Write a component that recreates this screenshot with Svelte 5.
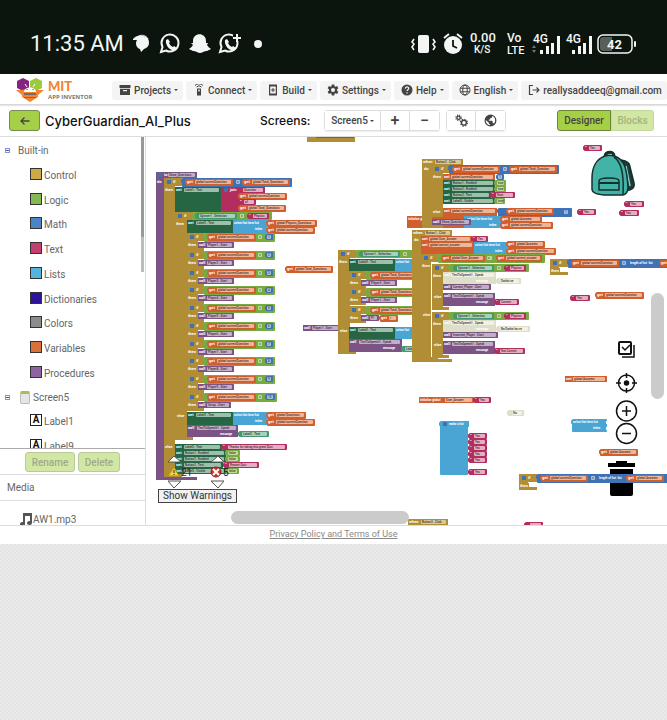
<script>
  const menus = [
    { id: 'projects', label: 'Projects' },
    { id: 'connect', label: 'Connect' },
    { id: 'build', label: 'Build' },
    { id: 'settings', label: 'Settings' },
    { id: 'help', label: 'Help' },
    { id: 'english', label: 'English' },
    { id: 'account', label: 'reallysaddeeq@gmail.com' }
  ];
  const drawers = [
    ['Control', '#cdaa48'], ['Logic', '#85b853'], ['Math', '#4c83c3'],
    ['Text', '#c33f70'], ['Lists', '#55b3dc'], ['Dictionaries', '#2b159a'],
    ['Colors', '#8c8c8c'], ['Variables', '#d9713a'], ['Procedures', '#8d64a0']
  ];

  const colors = {
    gold: '#b18e35', purple: '#7c5385', orange: '#d05f2d', green: '#266643',
    logic: '#77ab41', math: '#3f71b5', text: '#b32d5e', list: '#49a6d4',
    getter: '#439970', pale: '#dddfc8', white: '#ffffff'
  };
  const fields = {
    gold: '#d9c99b', purple: '#c3aec8', orange: '#efb599', green: '#9dbfac',
    logic: '#bddb9e', math: '#a7c1e2', text: '#e5aec5', list: '#b3dced',
    getter: '#a4d2bc', pale: '#f1f1e6', white: '#ffffff'
  };

  // [colour, x, y, width, height, label, field text, field offset, plug]
  const blocks = [];
  const add = (...b) => blocks.push(b);
  const get = (x, y, w, name) => add('orange', x, y, w, 7, 'get', name, 9, true);
  const call = (x, y, w, name) => add('purple', x, y, w, 6, 'call', name, 9);
  const str = (x, y, w, name) => add('text', x, y, w, 6, '“', name, 5, true);
  const set = (x, y, w, h, name) => add('green', x, y, w, h, 'set', name, 9);
  const frame = (x, y, w, h, head, label) => {
    add('gold', x, y, w, h);
    add('gold', x, y, head, 8, label);
    add('gold', x, y + h - 3, head, 3);
  };
  const ifFrame = (x, y, w, h, head) => {
    frame(x, y, w, h, head, '');
    add('math', x + 3, y + 2, 4, 4);
    add('gold', x + 8, y + 1, 8, 6, 'if');
    add('gold', x, y + 9, 10, 5, 'then');
  };
  const compare = (c, x, y, w, h, left, right) => {
    add(c, x, y, w, h, '', '', 0, true);
    get(x + 4, y + 1, 47, left);
    add(c, x + 53, y + 1, 7, 6, '', '=', 1);
    if (right) get(x + 61, y + 1, w - 63, right);
  };

  frame(307, 134, 48, 6, 48, '');
  add('purple', 316, 134, 38, 4);

  // procedure that shows the questions
  add('purple', 156, 172, 8, 308);
  add('purple', 156, 172, 41, 6, '', 'Show_Questions', 12);
  add('purple', 156, 477, 41, 3);
  add('math', 158, 173, 4, 4);
  add('purple', 163, 172, 4, 5, 'to');
  add('purple', 156, 179, 7, 5, 'do');
  ifFrame(164, 178, 11, 299, 18);
  compare('math', 182, 178, 110, 9, 'global currentQuestion', 'global Total_Questions');
  set(175, 187, 46, 25, 'Label1 . Text');
  add('text', 221, 187, 19, 25);
  add('text', 221, 187, 44, 6, '', 'Question', 22);
  add('text', 229, 187, 11, 6, 'join');
  add('math', 224, 188, 4, 4);
  get(239, 193, 48, 'global currentQuestion');
  str(239, 199, 17, 'of');
  get(239, 205, 47, 'global Total_Questions');
  ifFrame(175, 212, 12, 228, 18);
  add('logic', 193, 212, 79, 8, '', '', 0, true);
  add('getter', 196, 213, 41, 6, '', 'Spinner1 . Selection', 3, true);
  add('logic', 239, 213, 7, 6, '', '=', 1);
  str(248, 213, 21, 'Physics');
  set(187, 220, 46, 13, 'Label2 . Text');
  add('list', 233, 220, 34, 13, 'select list item list');
  add('list', 254, 226, 12, 5, 'index');
  get(267, 220, 50, 'global Physics_Questions');
  get(267, 227, 48, 'global currentQuestion');
  for (let i = 0; i < 10; i++) {
    const y = 233 + Math.round(i * 17.75);
    ifFrame(187, y, 11, 18, 17);
    add('logic', 204, y, i === 9 ? 73 : 71, 9, '', '', 0, true);
    get(208, y + 1, 48, 'global currentQuestion');
    add('logic', 257, y + 1, 7, 6, '', '=', 1);
    add('math', 266, y + 1, i === 9 ? 9 : 7, 6, '', String(i + 1), 1, true);
    call(198, y + 9, i === 9 ? 33 : 36, i === 9 ? 'Setup . Start' : `Player${i + 1} . Start`);
  }
  add('gold', 176, 413, 11, 5, 'else');
  set(187, 412, 46, 13, 'Label2 . Text');
  add('list', 233, 412, 34, 13, 'select list item list');
  add('list', 254, 418, 12, 5, 'index');
  get(267, 412, 39, 'global Questions');
  get(267, 419, 48, 'global currentQuestion');
  add('purple', 187, 425, 51, 12, 'call', 'TextToSpeech1 . Speak', 10);
  add('purple', 219, 431, 19, 5, 'message');
  add('getter', 239, 431, 30, 6, '', 'Label2 . Text', 3, true);
  add('gold', 164, 444, 11, 5, 'else');
  set(175, 444, 47, 6, 'Label2 . Text');
  add('text', 222, 444, 65, 6, '“', 'Thanks for taking this great Quiz', 6, true);
  set(175, 450, 51, 6, 'Button1 . Enabled');
  add('logic', 226, 450, 14, 6, '', 'false', 2, true);
  set(175, 456, 51, 6, 'Button2 . Enabled');
  add('logic', 226, 456, 14, 6, '', 'false', 2, true);
  set(175, 462, 48, 6, 'Button3 . Text');
  str(224, 462, 35, 'Restart Quiz');
  set(175, 468, 51, 6, 'Label3 . Visible');
  add('logic', 226, 468, 13, 6, '', 'false', 2, true);

  // loose pieces beside the procedure
  get(286, 266, 47, 'global Total_Questions');
  call(303, 325, 37, 'Player7 . Start');

  // physics branch
  ifFrame(338, 250, 12, 104, 18);
  add('logic', 356, 250, 58, 8, '', '', 0, true);
  add('getter', 360, 251, 40, 6, '', 'Spinner1 . Selection', 3, true);
  add('logic', 402, 251, 7, 6, '', '=', 1);
  set(349, 259, 46, 12, 'Label2 . Text');
  add('list', 395, 259, 20, 12, 'select list');
  for (const y of [271, 288, 306]) {
    ifFrame(349, y, 12, 17, 17);
    add('logic', 366, y, 50, 9, '', '', 0, true);
    get(371, y + 1, 46, 'global Total_Questions');
  }
  call(361, 280, 36, 'Player3 . Start');
  call(361, 297, 36, 'Player1 . Start');
  call(361, 315, 18, 'Pl');
  get(380, 315, 18, 'i');
  add('gold', 339, 328, 10, 5, 'else');
  set(349, 327, 46, 12, 'Label2 . Text');
  add('list', 395, 327, 20, 12, 'select list');
  add('purple', 349, 339, 53, 13, 'call', 'TextToSpeech1 . Speak', 10);
  add('purple', 382, 345, 19, 5, 'message');
  add('getter', 402, 346, 14, 6, '', 'Label', 3, true);

  // next-button handler
  add('orange', 407, 216, 60, 12, 'initialize glo');
  frame(422, 159, 10, 69, 41, 'when');
  add('gold', 434, 159, 29, 6, '', 'Button2 . Click', 1);
  add('gold', 423, 166, 8, 5, 'do');
  ifFrame(432, 165, 11, 52, 17);
  compare('math', 449, 165, 110, 9, 'global currentQuestion', 'global Total_Question');
  add('orange', 443, 174, 52, 6, 'set', 'global currentQuestion', 8);
  add('math', 497, 174, 7, 6, '', '1', 1, true);
  set(443, 180, 52, 6, 'Button1 . Enabled');
  add('logic', 495, 180, 11, 6, '', 'true', 2, true);
  set(443, 186, 52, 6, 'Button2 . Enabled');
  add('logic', 495, 186, 11, 6, '', 'true', 2, true);
  set(443, 192, 48, 6, 'Button3 . Text');
  str(491, 192, 24, 'Next');
  set(443, 198, 52, 6, 'Label3 . Visible');
  add('logic', 495, 198, 10, 6, '', 'true', 2, true);
  add('gold', 432, 209, 10, 5, 'else');
  add('orange', 443, 208, 54, 8, 'set', 'global currentQuestion', 8);
  add('math', 498, 208, 74, 9, '', '', 0, true);
  get(507, 208, 47, 'global currentQuestion');
  add('math', 562, 209, 8, 6, '', '1', 2, true);
  add('orange', 443, 216, 22, 12);
  add('list', 464, 216, 38, 12, '   select list item list');
  add('list', 488, 222, 12, 5, 'index');
  call(432, 219, 39, 'Show_Questions');
  get(501, 216, 41, 'global Answers');
  get(501, 222, 52, 'global currentQuestion');

  // answer-check handler
  frame(412, 230, 10, 132, 40, 'when');
  add('gold', 424, 230, 28, 6, '', 'Button1 . Click', 1);
  add('gold', 413, 237, 8, 5, 'do');
  add('orange', 421, 236, 51, 6, 'set', 'global User_Answer', 8);
  str(472, 236, 16, 'Yes');
  add('orange', 421, 242, 53, 12, 'set', 'global correct_answer', 8);
  add('list', 474, 242, 33, 12, 'select list item list');
  add('list', 494, 248, 12, 5, 'index');
  get(507, 241, 38, 'global Answers');
  get(507, 248, 49, 'global currentQuestion');
  ifFrame(421, 254, 10, 106, 17);
  add('logic', 438, 254, 107, 9, '', '', 0, true);
  get(442, 255, 43, 'global User_Answer');
  add('logic', 486, 255, 8, 6, '', '=', 1);
  get(497, 255, 45, 'global correct_answer');
  for (const y of [264, 312]) {
    ifFrame(432, y, 11, 46, 17);
    add('logic', 449, y, 80, 8, '', '', 0, true);
    add('getter', 454, y + 1, 40, 6, '', 'Spinner1 . Selection', 3, true);
    add('logic', 496, y + 1, 7, 6, '', '=', 1);
    str(505, y + 1, 21, 'Physics');
    add('pale', 443, y + 8, 53, 12, 'call', 'TextToSpeech1 . Speak', 8);
    add('pale', 475, y + 14, 20, 5, 'message');
    add('gold', 433, y + 30, 10, 5, 'else');
    add('purple', 443, y + 29, 52, 13, 'call', 'TextToSpeech1 . Speak', 9);
    add('purple', 475, y + 35, 19, 5, 'message');
  }
  add('pale', 497, 278, 24, 6, '', 'Daidai ne', 3, true);
  call(443, 284, 48, 'Correct_Player . Start');
  str(495, 299, 24, 'Correct');
  add('pale', 497, 326, 33, 6, '', 'Ba Daidai ba ne', 3, true);
  call(443, 332, 55, 'Incorrect_Player . Start');
  str(495, 348, 30, 'Not Correct');
  add('gold', 422, 312, 9, 5, 'else');

  // loose text, list and variable pieces
  str(584, 145, 18, 'Yes');
  str(625, 201, 19, 'Yes');
  str(620, 210, 19, 'Yes');
  str(578, 209, 18, 'Yes');
  str(571, 295, 19, 'Yes');
  get(596, 292, 48, 'global currentQuestion');
  ifFrame(550, 259, 9, 16, 18);
  compare('math', 568, 259, 240, 9, 'global currentQuestion', '');
  add('math', 629, 260, 30, 6, 'length of list  list');
  get(660, 260, 40, '');
  add('orange', 565, 376, 42, 6, 'set', 'global Answers', 8);
  add('pale', 508, 410, 16, 6, '', 'No', 4, true);
  add('list', 572, 419, 35, 13, 'select list item list', '', 0, true);
  add('list', 592, 425, 14, 5, 'index');
  add('white', 606, 421, 2, 3);
  add('white', 606, 427, 2, 3);
  get(600, 449, 38, 'global Answers');
  add('orange', 419, 397, 55, 6, 'initialize global', 'User_Answer', 26);
  str(474, 397, 17, 'Yes');
  add('list', 440, 421, 28, 54, '', '', 0, true);
  add('math', 443, 422, 4, 4);
  add('list', 448, 421, 21, 6, 'make a list');
  for (const y of [433, 439, 445, 451, 457, 469]) str(469, y, 18, 'Yes');
  frame(408, 519, 10, 20, 40, 'when');
  add('gold', 420, 519, 28, 6, '', 'Button3 . Click', 1);
  add('text', 525, 522, 18, 6, '', ' ', 5, true);

  // piece dropped over the trash can
  const mark = blocks.length;
  ifFrame(519, 474, 9, 16, 18);
  compare('math', 537, 474, 240, 9, 'global currentQuestion', '');
  add('math', 598, 475, 28, 6, 'length of list  list');
  get(627, 475, 37, 'global Answers');
  const overBin = blocks.splice(mark);
</script>

{#snippet icon(id)}
  <svg class="ic" viewBox="0 0 24 24" aria-hidden="true">
    {#if id === 'projects'}
      <path d="M1 2h22v6H1zM2 9.500h20V22H2zM8 12v2.500h8V12z" fill-rule="evenodd" />
    {:else if id === 'connect'}
      <path d="M8 9h8v14H8z" /><circle cx="12" cy="13" r="1.800" fill="#f4f4f4" />
      <path d="M7 6a7 7 0 0 1 10 0M4 3a11 11 0 0 1 16 0" fill="none" stroke="currentColor" stroke-width="2" />
    {:else if id === 'build'}
      <path d="M4 1h16v22H4zM6.500 5v14h11V5zM11 8h2v3h3v2h-3v3h-2v-3H8v-2h3z" fill-rule="evenodd" />
    {:else if id === 'settings'}
      <path d="M9.500 1h5l.6 3.300 2 1.100 3.100-1.200 2.500 4.300-2.600 2.200v2.600l2.600 2.200-2.500 4.300-3.100-1.200-2 1.100-.6 3.300h-5l-.6-3.300-2-1.100-3.100 1.200-2.500-4.300 2.600-2.200v-2.600L1.300 8.500l2.500-4.300 3.100 1.200 2-1.100zM12 8a4 4 0 1 0 0 8 4 4 0 0 0 0-8z" fill-rule="evenodd" />
    {:else if id === 'help'}
      <circle cx="12" cy="12" r="11" />
      <path d="M8.500 9.500c0-5 7-5 7-.8 0 2.800-3.400 2.600-3.400 5.300M12 16.500v2.500" fill="none" stroke="#f4f4f4" stroke-width="2.400" />
    {:else if id === 'english'}
      <g fill="none" stroke="currentColor" stroke-width="2"><circle cx="12" cy="12" r="10" /><ellipse cx="12" cy="12" rx="4.500" ry="10" /><path d="M3 8.500h18M3 15.500h18" /></g>
    {:else if id === 'account'}
      <path d="M10 3H3v18h7M9 12h13M17 7l5 5-5 5" fill="none" stroke="currentColor" stroke-width="2.400" />
    {:else if id === 'gears'}
      <g fill="none" stroke="currentColor"><circle cx="6.500" cy="7" r="3" stroke-width="2.500" /><circle cx="6.500" cy="7" r="5" stroke-width="2" stroke-dasharray="2 2" /><circle cx="16.500" cy="16" r="4.500" stroke-width="2.500" /><circle cx="16.500" cy="16" r="6.500" stroke-width="2" stroke-dasharray="2.500 2.600" /></g>
    {:else if id === 'globe'}
      <path d="M12 1a11 11 0 1 0 0 22 11 11 0 0 0 0-22zm-1 19.900C6 20.300 3.100 16 3.200 11L9 16v2l2 1zM18.500 18c-.5-1-1-1.300-2.500-1.300V14l-1-1.500H9V10h2.500V7.500H14L15.500 3.700C20.500 5.600 22.500 12 18.500 18z" fill-rule="evenodd" />
    {:else if id === 'back'}
      <path d="M21 12H4M11 5l-7 7 7 7" fill="none" stroke="currentColor" stroke-width="2.600" />
    {/if}
  </svg>
{/snippet}

{#snippet shapes(list)}
  {#each list as [c, x, y, w, h, label, field, offset, plug]}
    <rect {x} {y} width={w} height={h} fill={colors[c]} rx={plug ? 1 : 0} />
    {#if plug}<rect x={x - 1} y={y + 1} width="2" height="4" rx="1" fill={colors[c]} />{/if}
    {#if label}<text x={x + 1} y={y + 4} class="lead" class:long={label.length > 4}>{label}</text>{/if}
    {#if field}
      <rect x={x + offset} y={y + 1} width={w - offset - 2} height="4" rx="1" fill={fields[c]} />
      <text x={x + offset + 1} y={y + 4} class="field">{field}</text>
    {/if}
  {/each}
{/snippet}

<div class="page">
  <div class="status">
    <span class="clock">11:35 AM</span>
    <svg class="notes" viewBox="0 0 132 24" width="132" height="24" aria-hidden="true" fill="#f3f6f4">
      <path d="M1 7C3 4 7 3 11 4c4 0 6 3 6 7 0 3-2 5-5 6l-3 3-1-3c-4-1-5-6-3-9L1 8z" /><path d="M5 5C9 2 14 3 16 7" fill="none" stroke="#f3f6f4" />
      <g fill="none" stroke="#f3f6f4" stroke-width="2"><path d="M29 20l1.500-5a8.500 8.500 0 1 1 3.500 3.500z" /><path d="M88 20l1.500-5a8.500 8.500 0 1 1 3.500 3.500z" /></g>
      <path d="M34 8l2-1 2 3-1 1c1 2 2 3 4 4l1-1 3 2-1 2c-5 2-11-4-10-10zM93 8l2-1 2 3-1 1c1 2 2 3 4 4l1-1 3 2-1 2c-5 2-11-4-10-10z" />
      <path d="M101 0h9v9h-9z" fill="#0b150e" /><path d="M104 2h2v3h3v2h-3v3h-2V7h-3V5h3z" />
      <path d="M61 9c0-9 13-9 13 0v2l2 0-1 2c1 2 3 3 4 4-1 1-3 1-4 2-3 0-5 2-7 2s-4-2-7-2c-1-1-3-1-4-2 1-1 3-2 4-4l-2-2h2z" />
      <circle cx="126" cy="12" r="4" />
    </svg>
    <svg class="signals" viewBox="0 0 226 24" width="226" height="24" aria-hidden="true" fill="#f3f6f4">
      <rect x="8" y="3" width="11" height="18" rx="2" />
      <path d="M4 7l-2 3 2 2-2 3 2 3M23 7l2 3-2 2 2 3-2 3" fill="none" stroke="#f3f6f4" stroke-width="1.600" />
      <circle cx="43" cy="13" r="9" /><path d="M43 8v6l4 2" fill="none" stroke="#0b150e" stroke-width="1.800" /><path d="M34 6l5-4M52 6l-5-4" stroke="#f3f6f4" stroke-width="2" />
      <g font-weight="500"><text x="60" y="10" font-size="13">0.00</text><text x="64" y="21" font-size="10">K/S</text>
      <text x="97" y="10" font-size="12">Vo</text><text x="97" y="22" font-size="11">LTE</text>
      <text x="123" y="11" font-size="12">4G</text><text x="156" y="11" font-size="12">4G</text></g>
      <path d="M130 18h3v4h-3zM136 14h3v8h-3zM141 11h3v11h-3zM147 4h3v18h-3zM162 18h3v4h-3zM168 14h3v8h-3zM173 11h3v11h-3zM179 4h3v18h-3z" />
      <path d="M122 16l2-3 2 3zM122 18h4l-2 3z" fill="#6d7570" />
      <rect x="188" y="3" width="34" height="18" rx="5" fill="none" stroke="#f3f6f4" stroke-width="1.500" />
      <path d="M193 5h9v14h-9q-3 0-3-3V8q0-3 3-3z" fill="#565f59" /><rect x="224" y="9" width="2" height="6" rx="1" />
      <text x="197" y="17" font-size="13" font-weight="700">42</text>
    </svg>
  </div>

  <header class="top">
    <a class="logo" href="#home" aria-label="MIT App Inventor">
      <svg viewBox="0 0 30 26" width="30" height="26" aria-hidden="true">
        <path d="M8 1l6 3v7l-6 3-6-3V4z" fill="#852480" /><path d="M21 1l6 3v7l-6 3-6-3V4z" fill="#9bcb3c" />
        <path d="M1 13h6l8-2 8 2h6l-6 5v2l-8 5-8-5v-2z" fill="#f28433" />
        <path d="M9 16h12v2H9zM9 20h12v1H9z" fill="#6d6e70" /><path d="M9 15c0-6 12-6 12 0z" fill="#fff" />
        <path d="M12 12v1M18 12v1" stroke="#444" /><path d="M10 7l2 3M20 7l-2 3" stroke="#fff" />
      </svg>
      <span class="words"><b>MIT</b><small>APP INVENTOR</small></span>
    </a>
    <nav>
      {#each menus as m}
        <button class="menu">{@render icon(m.id)}<span>{m.label}</span>{#if m.id !== 'account'}<i></i>{/if}</button>
      {/each}
    </nav>
  </header>

  <div class="toolbar">
    <button class="back" aria-label="Back to projects">{@render icon('back')}</button>
    <h1>CyberGuardian_AI_Plus</h1>
    <span class="screens">Screens:</span>
    <div class="group">
      <button class="pick">Screen5<i></i></button><button class="sq big" aria-label="Add screen">+</button><button class="sq big" aria-label="Remove screen">−</button>
    </div>
    <div class="group tools">
      <button class="sq" aria-label="Project properties">{@render icon('gears')}</button><button class="sq" aria-label="Publish">{@render icon('globe')}</button>
    </div>
    <div class="views"><button class="on">Designer</button><button class="off" disabled>Blocks</button></div>
  </div>

  <main>
    <aside>
      <div class="tree">
        <div class="root"><span class="fold"></span>Built-in</div>
        {#each drawers as [name, color]}
          <div class="leaf"><span class="chip" style:background={color}></span><span>{name}</span></div>
        {/each}
        <div class="root"><span class="fold"></span><span class="phone"></span>Screen5</div>
        <div class="leaf"><span class="letter">A</span><span>Label1</span></div>
        <div class="leaf"><span class="letter">A</span><span>Label9</span></div>
        <div class="bar"></div>
      </div>
      <div class="actions"><button disabled>Rename</button><button disabled>Delete</button></div>
      <div class="media">Media</div>
      <div class="file">
        <svg viewBox="0 0 14 14" width="14" height="14" aria-hidden="true"><path d="M4 1h9v10a2.500 2 0 1 1-2-2V4H6v8a2.500 2 0 1 1-2-2z" fill="#555" /></svg>AW1.mp3
      </div>
    </aside>

    <section class="workspace">
      <svg class="canvas" viewBox="146 137 521 388" width="521" height="388">
        {@render shapes(blocks)}

        <g stroke="#12312d" stroke-width="1.500" stroke-linejoin="round">
          <path d="M621 160c7 1 9 3 9 7l4 16c1 5-2 7-8 8z" fill="#173f38" />
          <path d="M626 166l4 20" stroke="#9fc7bd" fill="none" />
          <path d="M605 156c1-5 9-5 9 0" fill="none" stroke-width="3" />
          <path d="M605 156c-9 3-13 12-13 22v11c0 4 6 6 16 6h15c4-1 5-4 5-8-1-14-2-28-14-31-3-1-6-1-9 0z" fill="#42b3a6" />
          <path d="M614 157c8 5 10 19 9 37" fill="none" /><path d="M599 181q0-3 10-3t10 3v9h-20z" fill="#42b3a6" /><path d="M599 183h20" fill="none" stroke-width="2" />
        </g>

        <g fill="none" stroke="#111" stroke-width="1.500">
          <rect x="619" y="342" width="12" height="12" rx="1" stroke-width="2" /><path d="M622 347l3 3 5-5" /><path d="M634 345v12h-12" />
          <circle cx="626.500" cy="383" r="8" /><path d="M626.500 373v5M626.500 388v5M616 383h5M632 383h5" /><circle cx="626.500" cy="383" r="2" fill="#111" />
          <circle cx="626.500" cy="411" r="10" /><path d="M622 411h9M626.500 406v10" />
          <circle cx="626.500" cy="433.500" r="10" /><path d="M622 433.500h9" />
        </g>
        <path d="M608 463h8v-2h11v2h8v4h-27zM610 469h23v25q0 2-2 2h-19q-2 0-2-2z" fill="#000" />
        {@render shapes(overBin)}

        <g fill="#fff" stroke="#555" stroke-width="1">
          <path d="M168 462l6-6 7 6zM211 462l7-6 6 6zM168 481h13l-7 7zM211 481h13l-6 7z" />
        </g>
        <path d="M174 467l5 9h-11z" fill="#f5cf35" stroke="#b58f1a" stroke-width="1" /><path d="M174 470v3M174 474v1" stroke="#333" />
        <circle cx="216" cy="472" r="5" fill="#cf3327" stroke="#8f211b" /><path d="M213 469l6 6M219 469l-6 6" stroke="#fff" stroke-width="2" />
        <text x="181" y="476" class="count">21</text><text x="223" y="476" class="count">5</text>
      </svg>
      <button class="warnings">Show Warnings</button>
      <span class="hbar"></span><span class="vbar"></span>
    </section>
  </main>

  <footer><a href="#privacy">Privacy Policy and Terms of Use</a></footer>
</div>

<style>
  :global(body) {
    margin: 0;
    background: #e7e7e7 repeating-conic-gradient(#e3e3e3 0 25%, #ebebeb 0 50%) 0 0 / 4px 4px;
  }
  .page { font-family: Roboto, "Open Sans", sans-serif; font-size: 10px; color: #444; overflow: hidden; }
  button { font: inherit; color: inherit; margin: 0; padding: 0; box-sizing: border-box; white-space: nowrap; }
  .ic { width: 12px; height: 12px; fill: currentColor; flex: none; }
  i { border: 2px solid transparent; border-top-color: currentColor; border-bottom: 0; margin-left: 2px; display: inline-block; vertical-align: middle; }

  .status { height: 74px; background: #0b150e; color: #f3f6f4; display: flex; align-items: center; padding: 14px 31px 0 30px; box-sizing: border-box; }
  .status svg { overflow: visible; }
  .clock { font-size: 22px; line-height: 24px; white-space: nowrap; }
  .notes { margin-left: 8px; flex: none; }
  .signals { margin-left: auto; flex: none; }

  .top { height: 31px; background: #fff; border-bottom: 1px solid #d8d8d8; box-sizing: border-box; display: flex; align-items: center; padding: 2px 0 0 15px; box-shadow: 0 1px 1px #e6e6e6; position: relative; }
  .logo { display: flex; align-items: center; width: 97px; flex: none; text-decoration: none; gap: 3px; }
  .words { display: flex; flex-direction: column; color: #f28433; }
  .words b { font: 900 13px/13px Lato, sans-serif; }
  .words small { font: 700 6px/8px "Open Sans", sans-serif; color: #77777a; white-space: nowrap; }
  nav { display: flex; gap: 3px; }
  .menu { height: 19px; border: 0; border-radius: 3px; background: #f4f4f4; padding: 0 5px 0 7px; display: flex; align-items: center; gap: 3px; font-weight: 500; flex: none; }
  .menu i { margin-left: 0; }

  .toolbar { height: 32px; background: #fff; border-bottom: 1px solid #ddd; box-sizing: border-box; display: flex; align-items: center; padding: 0 13px 0 9px; font-weight: 500; }
  .back { width: 31px; height: 21px; background: #a5cf47; border: 1px solid #798b53; border-radius: 3px; display: grid; place-items: center; flex: none; }
  h1 { font-family: Inter, sans-serif; font-size: 13px; line-height: 20px; font-weight: 500; color: #111; margin: 0 0 0 5px; flex: none; width: 215px; }
  .screens { font-family: Inter, sans-serif; font-size: 12px; color: #111; width: 64px; flex: none; }
  .group { display: flex; height: 21px; border: 1px solid #ddd; border-radius: 3px; box-sizing: border-box; flex: none; box-shadow: 0 1px 1px #eee; }
  .group button { background: #fff; border: 0; border-right: 1px solid #ddd; }
  .group button:last-child { border-right: 0; }
  .pick { width: 56px; }
  .sq { width: 29px; display: grid; place-items: center; }
  .big { font-size: 16px; line-height: 16px; }
  .tools { margin-left: 6px; }
  .tools .ic { width: 13px; height: 13px; }
  .views { margin-left: auto; display: flex; height: 21px; }
  .on { width: 54px; background: #a5cf47; border: 1px solid #6c8638; border-radius: 3px 0 0 3px; }
  .off { width: 43px; background: #d2e7a3; border: 1px solid #c3d99a; color: #a3b47f; border-radius: 0 3px 3px 0; }

  main { display: flex; height: 388px; background: #fff; }
  aside { width: 146px; flex: none; border-right: 1px solid #ddd; box-sizing: border-box; color: #666; overflow: hidden; }
  .tree { height: 312px; overflow: hidden; position: relative; border-bottom: 1px solid #aaa; box-sizing: border-box; padding-top: 1px; }
  .root { height: 24px; display: flex; align-items: center; padding-left: 5px; }
  .fold { width: 3px; height: 3px; border: 1px solid #8b91c9; background: linear-gradient(#4e57a8, #4e57a8) center / 3px 1px no-repeat; margin-right: 8px; }
  .phone { width: 8px; height: 9px; border: 1px solid #bbb; border-top: 3px solid #a5bf50; background: #e5e5e5; border-radius: 2px; margin: 0 3px 0 2px; }
  .leaf { height: 25px; display: flex; align-items: center; padding: 2px 0 0 30px; gap: 2px; line-height: 16px; box-sizing: border-box; }
  .leaf:nth-child(4n) { height: 24px; }
  .chip { width: 10px; height: 10px; border: 1px solid #333; margin-bottom: 4px; }
  .letter { width: 10px; height: 10px; border: 1px solid #222; color: #111; line-height: 10px; font-weight: 700; text-align: center; background: #fff; margin-bottom: 4px; }
  .bar { position: absolute; right: 1px; top: 0; width: 3px; height: 135px; background: linear-gradient(#999 0 100px, #bbb 0); }
  .actions { height: 26px; box-sizing: border-box; border-bottom: 1px solid #ddd; display: flex; gap: 3px; padding: 3px 0 0 25px; }
  .actions button { width: 50px; height: 20px; background: #d2e7a3; border: 1px solid #b9c99a; color: #a0ab8b; border-radius: 3px; font-weight: 500; }
  .actions button + button { width: 42px; }
  .media { height: 26px; line-height: 26px; box-sizing: border-box; padding-left: 7px; border-bottom: 1px solid #ddd; }
  .file { display: flex; align-items: end; padding: 11px 0 0 19px; line-height: 12px; }

  .workspace { flex: 1; min-width: 0; position: relative; overflow: hidden; }
  .canvas { display: block; }
  .lead { font-size: 4px; font-weight: 700; fill: #fff; white-space: pre; }
  .long { font-size: 3px; }
  .field { font-size: 3px; font-weight: 500; fill: #3e3030; }
  .count { font-size: 10px; fill: #222; }
  .warnings { position: absolute; left: 12px; bottom: 22px; height: 14px; width: 79px; border: 1px solid #444; background: #f1f1f1; line-height: 12px; color: #333; }
  .hbar, .vbar { position: absolute; background: #cbcbcb; border-radius: 7px; }
  .hbar { left: 85px; width: 178px; height: 13px; bottom: 1px; }
  .vbar { right: 3px; width: 13px; top: 156px; height: 106px; }

  footer { height: 19px; background: #fff; border-top: 1px solid #ddd; box-sizing: border-box; text-align: center; font-size: 9px; line-height: 17px; }
  footer a { color: #888; }
</style>
